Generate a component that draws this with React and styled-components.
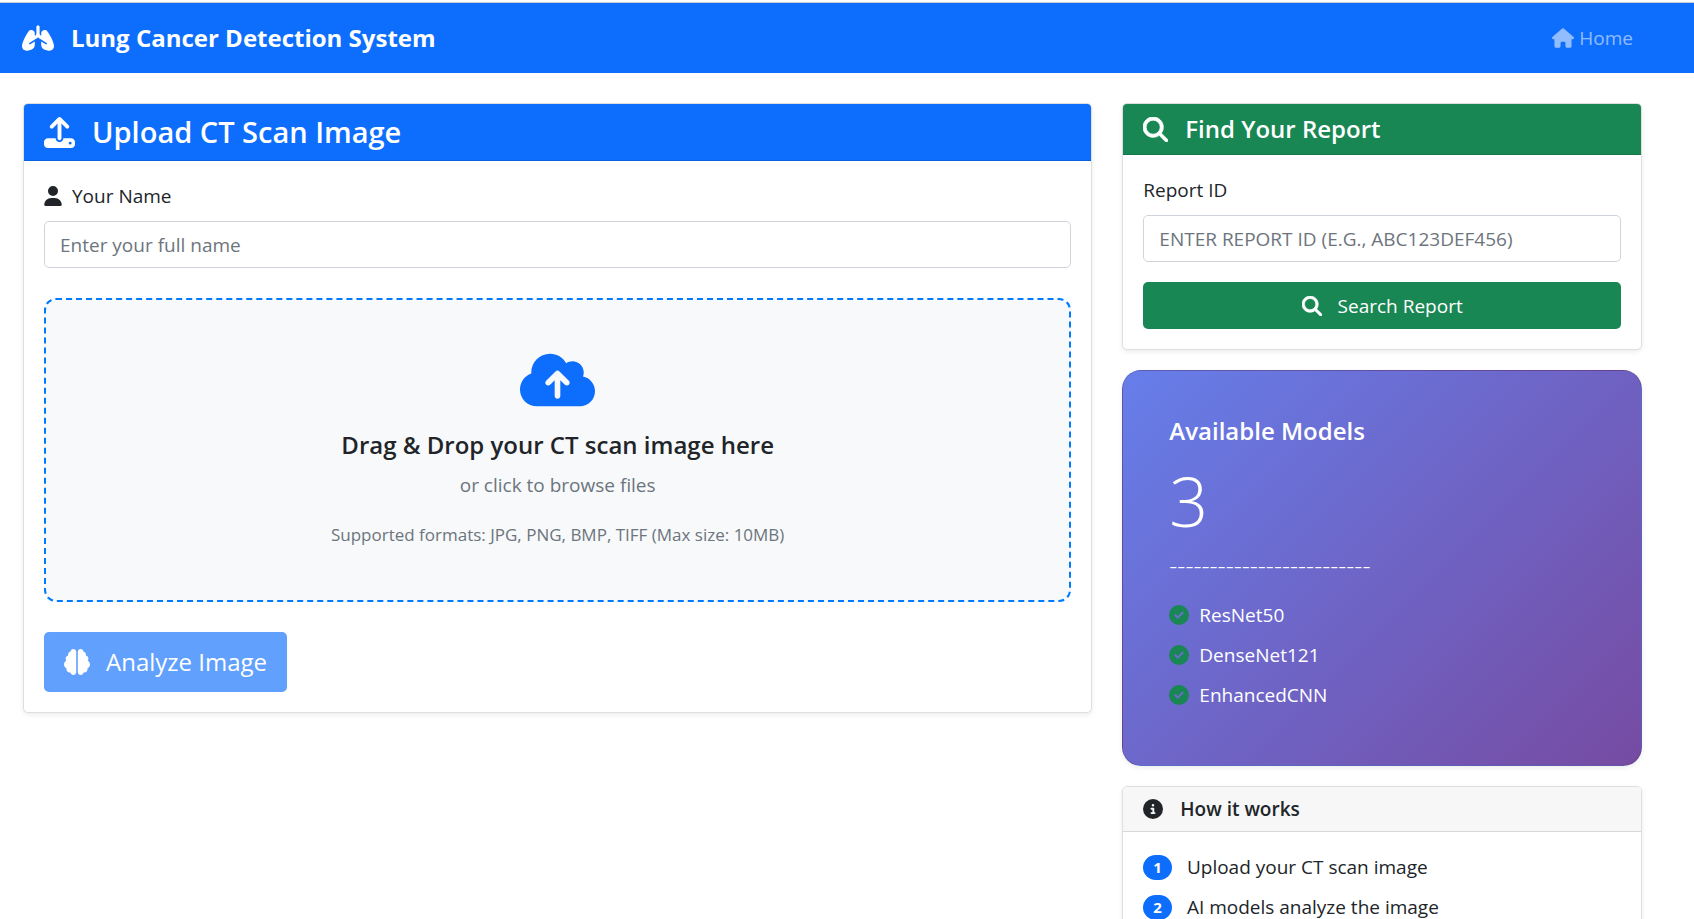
import React, { useState } from "react";
import styled, { createGlobalStyle } from "styled-components";
import {
  FaBrain,
  FaCircleCheck,
  FaCircleInfo,
  FaCloudArrowUp,
  FaHouse,
  FaLungs,
  FaMagnifyingGlass,
  FaUpload,
  FaUser,
} from "react-icons/fa6";

const models = ["ResNet50", "DenseNet121", "EnhancedCNN"];
const steps = ["Upload your CT scan image", "AI models analyze the image"];

const App = () => {
  const [name, setName] = useState("");
  const [reportId, setReportId] = useState("");

  return (
    <>
      <GlobalStyle />
      <Navbar>
        <Brand href="#">
          <FaLungs size={32} />
          Lung Cancer Detection System
        </Brand>
        <NavLink href="#">
          <FaHouse size={22} />
          Home
        </NavLink>
      </Navbar>
      <Main>
        <Column $span={8}>
          <Card>
            <CardHeader $bg="#0d6efd" $color="#fff">
              <FaUpload size={31} />
              <Title>Upload CT Scan Image</Title>
            </CardHeader>
            <CardBody>
              <Label htmlFor="name">
                <FaUser />
                Your Name
              </Label>
              <Input
                id="name"
                type="text"
                placeholder="Enter your full name"
                value={name}
                onChange={(e) => setName(e.target.value)}
              />
              <DropZone htmlFor="scan">
                <FaCloudArrowUp />
                <DropTitle>Drag &amp; Drop your CT scan image here</DropTitle>
                <DropText>or click to browse files</DropText>
                <DropHint>
                  Supported formats: JPG, PNG, BMP, TIFF (Max size: 10MB)
                </DropHint>
                <input id="scan" type="file" accept="image/*" hidden />
              </DropZone>
              <AnalyzeButton type="button" disabled>
                <FaBrain size={26} />
                Analyze Image
              </AnalyzeButton>
            </CardBody>
          </Card>
        </Column>
        <Column $span={4}>
          <Card>
            <CardHeader $bg="#198754" $color="#fff">
              <SearchIcon size={25} />
              <Subtitle>Find Your Report</Subtitle>
            </CardHeader>
            <CardBody>
              <Label htmlFor="reportId">Report ID</Label>
              <Input
                id="reportId"
                type="text"
                placeholder="ENTER REPORT ID (E.G., ABC123DEF456)"
                value={reportId}
                onChange={(e) => setReportId(e.target.value)}
              />
              <SearchButton type="button">
                <SearchIcon size={20} />
                Search Report
              </SearchButton>
            </CardBody>
          </Card>
          <ModelsCard>
            <Subtitle>Available Models</Subtitle>
            <Count>{models.length}</Count>
            <Divider>-------------------------</Divider>
            <List>
              {models.map((model) => (
                <ModelItem key={model}>
                  <FaCircleCheck size={20} />
                  {model}
                </ModelItem>
              ))}
            </List>
          </ModelsCard>
          <Card>
            <CardHeader $bg="#f7f7f7" $color="#212529">
              <FaCircleInfo size={20} />
              <SmallTitle>How it works</SmallTitle>
            </CardHeader>
            <CardBody>
              <List>
                {steps.map((step, index) => (
                  <StepItem key={step}>
                    <Badge>{index + 1}</Badge>
                    {step}
                  </StepItem>
                ))}
              </List>
            </CardBody>
          </Card>
        </Column>
      </Main>
    </>
  );
};

const GlobalStyle = createGlobalStyle`
  *,
  *::before,
  *::after {
    box-sizing: border-box;
  }
  body {
    margin: 0;
    padding-top: 2px;
    background: #fff;
    color: #212529;
    font-family: "Segoe UI", "Open Sans", "Noto Sans", sans-serif;
    font-size: 19px;
    line-height: 30px;
  }
  h1, h2, h3, p, ul {
    margin: 0;
    padding: 0;
  }
  button, input {
    font: inherit;
  }
  svg {
    flex-shrink: 0;
  }
`;

const Navbar = styled.nav`
  display: flex;
  align-items: center;
  justify-content: space-between;
  height: 71px;
  padding: 0 61px 0 22px;
  border-top: 1px solid #cccccc;
  background: #0d6efd;
`;

const Brand = styled.a`
  display: flex;
  align-items: center;
  gap: 17px;
  color: #fff;
  font-size: 24px;
  font-weight: 700;
  text-decoration: none;
`;

const NavLink = styled.a`
  display: flex;
  align-items: center;
  gap: 5px;
  color: rgba(255, 255, 255, 0.55);
  text-decoration: none;
`;

const Main = styled.main`
  display: grid;
  grid-template-columns: repeat(12, 1fr);
  align-items: start;
  column-gap: 30px;
  padding: 30px 52px 30px 23px;
`;

const Column = styled.div`
  grid-column: span ${(props) => props.$span};
  display: grid;
  gap: 20px;
`;

const Card = styled.section`
  border: 1px solid #dfdfdf;
  border-radius: 5px;
  background: #fff;
  box-shadow: 0 2px 5px rgba(0, 0, 0, 0.075);
  overflow: hidden;
`;

const CardHeader = styled.header`
  display: flex;
  align-items: center;
  gap: 17px;
  padding: 10px 20px;
  border-bottom: 1px solid rgba(0, 0, 0, 0.125);
  background: ${(props) => props.$bg};
  color: ${(props) => props.$color};
`;

const CardBody = styled.div`
  padding: 20px;
`;

const Title = styled.h1`
  font-size: 29px;
  font-weight: 600;
  line-height: 36px;
`;

const Subtitle = styled.h2`
  font-size: 24px;
  font-weight: 600;
  line-height: 30px;
`;

const SmallTitle = styled.h3`
  font-size: 19px;
  font-weight: 600;
  line-height: 24px;
`;

const SearchIcon = styled(FaMagnifyingGlass)`
  stroke: currentColor;
  stroke-width: 16px;
`;

const Label = styled.label`
  display: flex;
  align-items: center;
  gap: 10px;
  margin-bottom: 10px;
  svg {
    width: 18px;
    height: 20px;
  }
`;

const Input = styled.input`
  display: block;
  width: 100%;
  height: 47px;
  padding: 0 15px;
  border: 1px solid #ced4da;
  border-radius: 5px;
  background: #fff;
  color: #212529;
  &::placeholder {
    color: #6c757d;
    opacity: 1;
  }
`;

const DropZone = styled.label`
  display: flex;
  flex-direction: column;
  align-items: center;
  margin: 30px 0;
  padding: 50px;
  border: 2px dashed #007bff;
  border-radius: 12px;
  background: #f8f9fa;
  text-align: center;
  cursor: pointer;
  svg {
    width: 75px;
    height: 60px;
    color: #0d6efd;
  }
`;

const DropTitle = styled.span`
  margin: 20px 0 10px;
  font-size: 24px;
  font-weight: 600;
`;

const DropText = styled.span`
  color: #6c757d;
`;

const DropHint = styled.small`
  margin-top: 20px;
  color: #6c757d;
  font-size: 17px;
`;

const Button = styled.button`
  display: flex;
  align-items: center;
  justify-content: center;
  border: none;
  border-radius: 5px;
  color: #fff;
  cursor: pointer;
`;

const AnalyzeButton = styled(Button)`
  gap: 16px;
  height: 60px;
  padding: 0 20px;
  background: #0d6efd;
  font-size: 24px;
  opacity: 0.65;
`;

const SearchButton = styled(Button)`
  gap: 16px;
  width: 100%;
  height: 47px;
  margin-top: 20px;
  background: #198754;
`;

const ModelsCard = styled.section`
  padding: 45px 46px;
  border: 1px solid rgba(0, 0, 0, 0.125);
  border-radius: 19px;
  background: linear-gradient(135deg, #667eea 0%, #764ba2 100%);
  box-shadow: 0 2px 5px rgba(0, 0, 0, 0.075);
  color: #fff;
`;

const Count = styled.p`
  margin: 10px 0 4px;
  font-size: 68px;
  font-weight: 300;
  line-height: 90px;
`;

const Divider = styled.p`
  margin-bottom: 20px;
  font-size: 25px;
  font-weight: 300;
`;

const List = styled.ul`
  list-style: none;
`;

const ModelItem = styled.li`
  display: flex;
  align-items: center;
  gap: 10px;
  margin-bottom: 10px;
  svg {
    color: #198754;
  }
`;

const StepItem = styled.li`
  display: flex;
  align-items: center;
  gap: 15px;
  margin-bottom: 10px;
`;

const Badge = styled.span`
  padding: 5px 10px;
  border-radius: 13px;
  background: #0d6efd;
  color: #fff;
  font-size: 15px;
  font-weight: 700;
  line-height: 15px;
`;

export default App;
